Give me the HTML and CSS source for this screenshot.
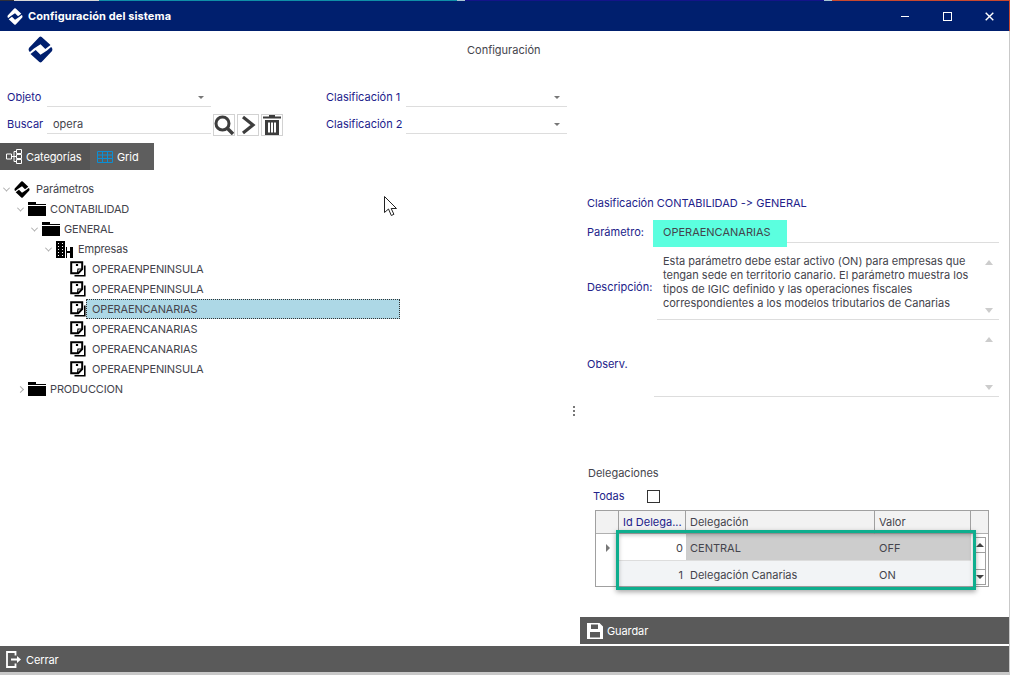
FILE: index.html
```html
<!DOCTYPE html>
<html lang="es">
<head>
<meta charset="utf-8">
<title>Configuración del sistema</title>
<link rel="stylesheet" href="styles.css">
</head>
<body>
<svg class="defs" width="0" height="0" aria-hidden="true">
  <defs>
    <symbol id="logo" viewBox="0 0 26 28">
      <path d="M11.800 1 Q13 .2 14.200 1 L23.400 9.400 L18 13.400 L13 8.600 L6.200 13 L2 16.600 L1 15.600 Q.2 14 1 12.400Z"/>
      <path d="M14.200 27 Q13 27.800 11.800 27 L2.600 18.600 L8 14.600 L13 19.400 L19.800 15 L24 11.400 L25 12.400 Q25.800 14 25 15.600Z"/>
    </symbol>
    <symbol id="folder" viewBox="0 0 18 14">
      <path d="M0 0h8v2h10v1H0zM0 4h18v10H0z"/>
    </symbol>
    <symbol id="note" viewBox="0 0 16 16">
      <path d="M1.200 1.200h11v7l-4 4h-7z" fill="#fff" stroke="#000" stroke-width="2"/>
      <path d="M14.800 4.500v10.300H4.500" fill="none" stroke="#000" stroke-width="1.600"/>
      <path d="M6.500 3.500h1v1h-1zM7.500 12l.5-4h4" fill="none" stroke="#000" stroke-width="1.200"/>
    </symbol>
  </defs>
</svg>
<div class="window">
  <div class="strip">
    <span class="seg s1"></span><span class="seg s2"></span><span class="seg s3"></span><span class="seg s5"></span><span class="seg s4"></span><span class="seg s5"></span><span class="seg s6"></span>
  </div>
  <header class="titlebar">
    <svg class="title-logo"><use href="#logo"/></svg>
    <span class="title-text">Configuración del sistema</span>
    <div class="controls">
      <span class="ctl ctl-min"></span>
      <span class="ctl ctl-max"></span>
      <svg class="ctl-close" viewBox="0 0 9 9"><path d="M.7.7l7.600 7.600M8.300.7L.7 8.300"/></svg>
    </div>
  </header>

  <div class="brand">
    <svg class="brand-logo"><use href="#logo"/></svg>
    <span class="brand-title">Configuración</span>
  </div>

  <main class="main">
    <section class="left">
      <div class="filters">
        <label class="lbl">Objeto</label>
        <div class="combo combo-a"><span class="caret"></span></div>
        <label class="lbl">Clasificación 1</label>
        <div class="combo"><span class="caret"></span></div>

        <label class="lbl lbl-r2">Buscar</label>
        <div class="search-wrap">
          <div class="search-input">opera</div>
          <button class="tool" aria-label="Buscar">
            <svg viewBox="0 0 20 20" width="20" height="20"><circle cx="8.500" cy="8.500" r="6.500" fill="none" stroke="#3d3d3d" stroke-width="3"/><path d="M13 13l6 6" stroke="#3d3d3d" stroke-width="3.400"/></svg>
          </button>
          <button class="tool" aria-label="Siguiente">
            <svg viewBox="0 0 16 20" width="16" height="20"><path d="M3 2l10 8-10 8" fill="none" stroke="#3d3d3d" stroke-width="3.200"/></svg>
          </button>
          <button class="tool" aria-label="Borrar">
            <svg viewBox="0 0 18 20" width="18" height="20"><path d="M6 0h6v1.500h6v2H0v-2h6z" fill="#3d3d3d"/><path d="M2 5h14v15H2zM5 7.500v10h2v-10zM8 7.500v10h2v-10zM11 7.500v10h2v-10z" fill="#3d3d3d" fill-rule="evenodd"/></svg>
          </button>
        </div>
        <label class="lbl lbl-r2">Clasificación 2</label>
        <div class="combo combo-r2"><span class="caret"></span></div>
      </div>

      <div class="tabs">
        <div class="tab tab-on">
          <svg viewBox="0 0 16 15" width="16" height="15" class="tab-ic"><path d="M.5 5h5v5h-5zM10.500 .5h5v4h-5zM10.500 5.500h5v4h-5zM10.500 10.500h5v4h-5zM5.500 7.500h2.500M8 2.500v10M8 2.500h2.500M8 7.500h2.500M8 12.500h2.500" fill="none" stroke="#fff"/></svg>
          Categorías
        </div>
        <div class="tab">
          <svg viewBox="0 0 16 12" width="16" height="12" class="tab-ic"><path d="M.5.5h15v11H.5zM.5 4h15M.5 7.500h15M5.500 .5v11M10.500 .5v11" fill="none" stroke="#0a8fd6"/></svg>
          Grid
        </div>
      </div>

      <ul class="tree">
        <li class="node d0"><span class="tw open"></span><svg class="ic-root"><use href="#logo"/></svg><span class="nl">Parámetros</span></li>
        <li class="node d1"><span class="tw open"></span><svg class="ic-folder"><use href="#folder"/></svg><span class="nl">CONTABILIDAD</span></li>
        <li class="node d2"><span class="tw open"></span><svg class="ic-folder"><use href="#folder"/></svg><span class="nl">GENERAL</span></li>
        <li class="node d3"><span class="tw open"></span>
          <svg class="ic-bld" viewBox="0 0 17 17"><path d="M0 0h9v17H0zM10 6h1v4h3V6h3v11h-3v-5h-3v5h-1z"/><path d="M2 2h1v1H2zM6 2h1v1H6zM2 5h1v1H2zM6 5h1v1H6zM2 8h1v1H2zM6 8h1v1H6zM2 11h1v1H2zM6 11h1v1H6zM2 14h1v1H2zM6 14h1v1H6z" fill="#fff"/></svg>
          <span class="nl">Empresas</span></li>
        <li class="node d4"><svg class="ic-note"><use href="#note"/></svg><span class="nl">OPERAENPENINSULA</span></li>
        <li class="node d4"><svg class="ic-note"><use href="#note"/></svg><span class="nl">OPERAENPENINSULA</span></li>
        <li class="node d4"><svg class="ic-note"><use href="#note"/></svg><span class="nl nl-sel">OPERAENCANARIAS</span></li>
        <li class="node d4"><svg class="ic-note"><use href="#note"/></svg><span class="nl">OPERAENCANARIAS</span></li>
        <li class="node d4"><svg class="ic-note"><use href="#note"/></svg><span class="nl">OPERAENCANARIAS</span></li>
        <li class="node d4"><svg class="ic-note"><use href="#note"/></svg><span class="nl">OPERAENPENINSULA</span></li>
        <li class="node d1"><span class="tw closed"></span><svg class="ic-folder"><use href="#folder"/></svg><span class="nl">PRODUCCION</span></li>
      </ul>
    </section>

    <div class="split"><span></span><span></span><span></span></div>

    <section class="right">
      <div class="crumb">Clasificación CONTABILIDAD -&gt; GENERAL</div>
      <div class="param-row">
        <span class="lbl param-lbl">Parámetro:</span>
        <div class="param-field"><span class="param-hl">OPERAENCANARIAS</span></div>
      </div>
      <div class="desc-row">
        <span class="lbl desc-lbl">Descripción:</span>
        <div class="memo">
          <p class="memo-text">Esta parámetro debe estar activo (ON) para empresas que tengan sede en territorio canario. El parámetro muestra los tipos de IGIC definido y las operaciones fiscales correspondientes a los modelos tributarios de Canarias</p>
          <div class="memo-scroll"><span class="up"></span><span class="down"></span></div>
        </div>
      </div>
      <div class="obs-row">
        <span class="lbl obs-lbl">Observ.</span>
        <div class="memo">
          <div class="memo-scroll memo-scroll-obs"><span class="up"></span><span class="down"></span></div>
        </div>
      </div>

      <div class="deleg-title">Delegaciones</div>
      <div class="todas"><span class="lbl">Todas</span><span class="check"></span></div>

      <div class="grid-wrap">
        <div class="grid">
          <div class="gh gc-ind"></div>
          <div class="gh">Id Delega...</div>
          <div class="gh">Delegación</div>
          <div class="gh">Valor</div>
          <div class="gh gh-end"></div>

          <div class="gi"><span class="row-arrow"></span></div>
          <div class="gd num cur">0</div>
          <div class="gd sel">CENTRAL</div>
          <div class="gd sel">OFF</div>
          <div class="gs">
            <span class="sb-btn"><span class="up dark"></span></span>
            <span class="sb-track"></span>
            <span class="sb-btn"><span class="down dark"></span></span>
          </div>

          <div class="gi"></div>
          <div class="gd num alt">1</div>
          <div class="gd alt">Delegación Canarias</div>
          <div class="gd alt">ON</div>
        </div>
        <div class="mark"></div>
      </div>

      <div class="save-bar">
        <svg viewBox="0 0 16 16" width="16" height="16"><path d="M0 0h12.500L16 3.500V16H0zM4 1.500V6h7V1.500zM3 9v5.500h10V9z" fill="#fff" fill-rule="evenodd"/></svg>
        Guardar
      </div>
    </section>
  </main>

  <footer class="close-bar">
    <svg viewBox="0 0 16 17" width="16" height="17"><path d="M9.500 4.500V1H1v15h8.500v-3.500" fill="none" stroke="#fff" stroke-width="1.800"/><path d="M5 7.500h6V5l4 3.500-4 3.500V9.500H5z" fill="#fff"/></svg>
    <span class="close-text">Cerrar</span>
  </footer>
  <div class="end-line"></div>

  <svg class="pointer" viewBox="0 0 14 21" width="14" height="21"><path d="M.5.5v16l4-3.500 2.800 6.500 2.600-1.200L7.200 12.500h5.300z" fill="#fff" stroke="#222" stroke-width="1"/></svg>
</div>
</body>
</html>
```
FILE: styles.css
```css
* { box-sizing: border-box; }
html, body { margin: 0; padding: 0; height: 100%; overflow: hidden; background: #fff; }
body { font: 11px/14px Inter, "Liberation Sans", sans-serif; color: #44444c; font-feature-settings: "calt" 0, "liga" 0; }
.defs { position: absolute; }

.window { position: relative; width: 1010px; height: 675px; display: flex; flex-direction: column; border-right: 1px solid #c9c9c9; }
.pointer { position: absolute; left: 384px; top: 196px; }

.strip { height: 1px; display: flex; margin-right: -1px; flex: none; }
.seg { display: block; height: 1px; }
.s1 { width: 14px; background: #30303a; }
.s2 { width: 85px; background: #d8d8d8; }
.s3 { width: 358px; background: #0f8fa8; }
.s4 { width: 359px; background: #14148a; }
.s5 { width: 8px; background: #a9c6d3; }
.s6 { flex: 1; background: #c9482e; }

.titlebar { height: 30px; flex: none; background: #001f6e; display: flex; align-items: center; padding-left: 7px; color: #fff; margin-right: -1px; border-right: 1px solid #c9482e; }
.title-logo { width: 16px; height: 17px; fill: #fff; }
.title-text { margin-left: 5px; font-weight: 700; font-size: 11px; letter-spacing: .1px; }
.controls { margin-left: auto; display: flex; align-items: center; }
.ctl { display: block; }
.ctl-min { width: 8px; height: 1px; background: #fff; margin-right: 34px; }
.ctl-max { width: 9px; height: 9px; border: 1px solid #fff; margin-right: 33px; }
.ctl-close { width: 9px; height: 9px; margin-right: 15px; }
.ctl-close path { stroke: #fff; stroke-width: 1.4; fill: none; }

.brand { height: 40px; flex: none; position: relative; display: flex; align-items: center; }
.brand-logo { width: 25px; height: 27px; fill: #001f6e; margin: 0 0 3px 28px; }
.brand-title { position: absolute; left: 467px; top: 12px; }

.main { flex: 1; min-height: 0; display: flex; }

.left { width: 570px; flex: none; padding-top: 16px; }
.filters { display: grid; grid-template-columns: 40px 279px 80px 161px; grid-template-rows: 20px 22px; row-gap: 5px; padding-left: 7px; align-items: center; }
.lbl { color: #1c1c8c; }
.lbl-r2 { padding-top: 2px; }
.combo { height: 20px; border-bottom: 1px solid #ddd; position: relative; }
.combo-a { width: 164px; }
.combo-r2 { align-self: end; height: 22px; }
.caret { position: absolute; right: 7px; top: 9px; border: 3.5px solid transparent; border-top: 3.5px solid #777; border-bottom: 0; }
.combo-r2 .caret { top: 11px; }
.search-wrap { display: flex; align-items: flex-start; gap: 2px; height: 22px; }
.search-input { width: 164px; height: 22px; border-bottom: 1px solid #ddd; padding: 5px 0 0 6px; }
.tool { width: 22px; height: 22px; margin-top: 2px; padding: 0; border: 1px solid #d2d2d2; background: #fff; display: flex; align-items: center; justify-content: center; }

.tabs { margin-top: 9px; width: 154px; height: 27px; background: #5a5a5a; display: flex; color: #fff; letter-spacing: -.1px; }
.tab { display: flex; align-items: center; gap: 4px; padding-left: 6px; }
.tab-on { width: 90px; background: #555; }
.tab + .tab { background: #5e5e5e; flex: 1; padding-left: 7px; }
.tab-ic { flex: none; }

.tree { list-style: none; margin: 9px 0 0; padding: 0; letter-spacing: -.15px; }
.node { height: 20px; display: flex; align-items: center; position: relative; }
.d0 { padding-left: 4px; }
.d1 { padding-left: 18px; }
.d2 { padding-left: 32px; }
.d3 { padding-left: 46px; }
.d4 { padding-left: 70px; }
.tw { width: 5px; height: 5px; flex: none; margin-right: 5px; border-right: 1px solid #aaa; border-bottom: 1px solid #aaa; }
.tw.open { transform: rotate(45deg) translate(-1px, -1px); }
.tw.closed { transform: rotate(-45deg); }
.ic-root { width: 16px; height: 17px; fill: #000; margin-right: 6px; }
.ic-folder { width: 18px; height: 14px; fill: #000; margin-right: 4px; }
.ic-bld { width: 17px; height: 17px; fill: #000; margin-right: 5px; }
.ic-note { width: 16px; height: 16px; margin-right: 6px; }
.nl-sel { position: absolute; left: 86px; top: 0; width: 314px; height: 20px; line-height: 20px; padding-left: 6px; background: #add8e6; outline: 1px dotted #333; outline-offset: -1px; }

.split { width: 10px; flex: none; display: flex; flex-direction: column; align-items: center; gap: 2px; padding-top: 335px; padding-right: 2px; }
.split span { display: block; width: 2px; height: 2px; background: #777; }

.right { flex: 1; min-width: 0; display: flex; flex-direction: column; }
.right > * { flex: none; }
.right .lbl { color: #22228a; }
.crumb { margin: 125px 0 0 7px; color: #22228a; }
.param-row { display: flex; margin-top: 10px; height: 27px; }
.param-lbl { width: 73px; padding: 5px 0 0 7px; flex: none; }
.param-field { flex: 1; margin: 0 10px 0 4px; height: 23px; border-bottom: 1px solid #ddd; }
.param-hl { display: block; position: relative; width: 134px; height: 27px; margin-left: -4px; padding: 5px 0 0 10px; background: #5bffdf; }
.desc-row { display: flex; margin-top: 5px; height: 68px; }
.desc-lbl { width: 77px; flex: none; padding: 28px 0 0 7px; }
.memo { flex: 1; position: relative; margin-right: 10px; border-bottom: 1px solid #ddd; padding: 2px 30px 0 6px; }
.memo-text { margin: 0; letter-spacing: -.01px; }
.memo-scroll { position: absolute; right: 6px; top: 8px; bottom: 6px; display: flex; flex-direction: column; justify-content: space-between; align-items: center; }
.memo-scroll-obs { top: 17px; }
.up { display: block; border: 4px solid transparent; border-bottom: 5px solid #ccc; border-top: 0; }
.down { display: block; border: 4px solid transparent; border-top: 5px solid #ccc; border-bottom: 0; }
.up.dark { border-bottom-color: #444; border-width: 0 4px 4px; }
.down.dark { border-top-color: #444; border-width: 4px 4px 0; }
.obs-row { display: flex; height: 77px; }
.obs-lbl { width: 74px; flex: none; padding: 37px 0 0 7px; }
.deleg-title { margin: 69px 0 0 8px; height: 14px; }
.todas { display: flex; margin: 9px 0 0 13px; align-items: center; height: 14px; }
.todas .lbl { width: 54px; }
.check { width: 13px; height: 13px; border: 1px solid #333; background: #fff; }

.grid-wrap { position: relative; margin: 7px 0 0 15px; width: 394px; height: 77px; }
.grid { width: 394px; height: 77px; border: 1px solid #a0a0a0; display: grid; grid-template-columns: 23px 67px 189px 96px 1fr; grid-template-rows: 23px 27px 25px; background: #fff; }
.gh { background: #f2f2f2; border-right: 1px solid #a0a0a0; border-bottom: 1px solid #b0b0b0; padding: 4px 0 0 4px; color: #22228a; }
.gh:nth-child(n+3) { color: #44444c; }
.gh-end { border-right: 0; }
.gc-ind { padding: 0; }
.gi { display: flex; align-items: center; justify-content: center; }
.row-arrow { display: block; border: 4px solid transparent; border-left: 4px solid #777; border-right: 0; }
.gd { padding: 7px 0 0 4px; border-bottom: 1px solid #ddd; }
.num { text-align: right; padding: 7px 3px 0 0; }
.cur { background: #fff; }
.sel { background: #cdcdcd; }
.alt { background: #f2f4f6; border-bottom: 0; }
.gs { grid-row: 2 / span 2; grid-column: 5; display: flex; flex-direction: column; padding: 3px 2px 1px 3px; }
.sb-btn { display: flex; align-items: center; justify-content: center; height: 16px; border: 1px solid #a0a0a0; background: #fff; }
.sb-track { flex: 1; border-left: 1px solid #a0a0a0; border-right: 1px solid #a0a0a0; }

.mark { position: absolute; left: 21px; top: 20px; width: 360px; height: 60px; border: 3px solid #0eae8e; box-shadow: 0 2px 5px rgba(0,0,0,.35), inset 0 2px 4px rgba(0,0,0,.25); }

.save-bar { margin-top: auto; margin-bottom: 2px; height: 27px; background: #5a5a5a; color: #fff; display: flex; align-items: center; gap: 4px; padding-left: 7px; letter-spacing: -.1px; }
.close-bar { height: 26px; flex: none; background: #5a5a5a; color: #fff; display: flex; align-items: center; gap: 4px; padding-left: 6px; letter-spacing: -.1px; }
.close-text { padding-top: 2px; }
.end-line { height: 3px; flex: none; background: #c8c8c8; }
```
